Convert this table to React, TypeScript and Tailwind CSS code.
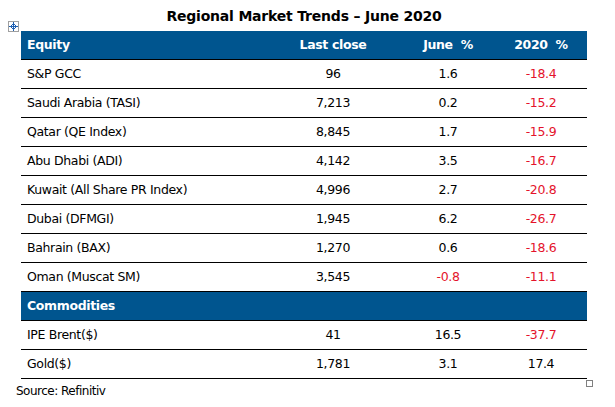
import React from "react";

type Row = { name: string; last: string; june: string; y: string };

const equity: Row[] = [
  { name: "S&P GCC", last: "96", june: "1.6", y: "-18.4" },
  { name: "Saudi Arabia (TASI)", last: "7,213", june: "0.2", y: "-15.2" },
  { name: "Qatar (QE Index)", last: "8,845", june: "1.7", y: "-15.9" },
  { name: "Abu Dhabi (ADI)", last: "4,142", june: "3.5", y: "-16.7" },
  { name: "Kuwait (All Share PR Index)", last: "4,996", june: "2.7", y: "-20.8" },
  { name: "Dubai (DFMGI)", last: "1,945", june: "6.2", y: "-26.7" },
  { name: "Bahrain (BAX)", last: "1,270", june: "0.6", y: "-18.6" },
  { name: "Oman (Muscat SM)", last: "3,545", june: "-0.8", y: "-11.1" },
];

const commodities: Row[] = [
  { name: "IPE Brent($)", last: "41", june: "16.5", y: "-37.7" },
  { name: "Gold($)", last: "1,781", june: "3.1", y: "17.4" },
];

function Val({ v }: { v: string }) {
  const neg = v.startsWith("-");
  return (
    <div className={neg ? "text-center text-[#e4132b]" : "text-center text-black"}>{v}</div>
  );
}

function DataRow({ r }: { r: Row }) {
  return (
    <div className="grid grid-cols-[244px_136px_94px_92px] h-[29px] items-center border-b border-black">
      <div className="pl-[6px]">{r.name}</div>
      <Val v={r.last} />
      <Val v={r.june} />
      <Val v={r.y} />
    </div>
  );
}

function MoveIcon() {
  return (
    <div className="absolute left-[8px] top-[21px] w-[11px] h-[11px] border border-[#a0a0a0] bg-white flex items-center justify-center">
      <svg width="9" height="9" viewBox="0 0 9 9">
        <g fill="#1f5fb0">
          <rect x="4" y="1" width="1" height="7" />
          <rect x="1" y="4" width="7" height="1" />
          <rect x="3" y="2" width="3" height="1" />
          <rect x="3" y="6" width="3" height="1" />
          <rect x="2" y="3" width="1" height="3" />
          <rect x="6" y="3" width="1" height="3" />
          <rect x="4" y="0" width="1" height="1" />
          <rect x="4" y="8" width="1" height="1" />
          <rect x="0" y="4" width="1" height="1" />
          <rect x="8" y="4" width="1" height="1" />
        </g>
      </svg>
    </div>
  );
}

export default function App() {
  return (
    <div className="relative w-[615px] h-[407px] bg-white text-black font-['DejaVu_Sans',Verdana,sans-serif] text-[12.5px] tracking-[-0.35px]">
      <MoveIcon />
      <div className="pl-[21px]">
        <div className="w-[566px]">
          <div className="h-[31px] flex items-end justify-center pb-[4px] font-bold text-[14px] tracking-[-0.2px]">
            Regional Market Trends – June 2020
          </div>
          <div className="grid grid-cols-[244px_136px_94px_92px] h-[29px] items-center bg-[#00558f] text-white font-bold border-b border-black">
            <div className="pl-[6px]">Equity</div>
            <div className="text-center">Last close</div>
            <div className="text-center">June&nbsp;&nbsp;%</div>
            <div className="text-center">2020&nbsp;&nbsp;%</div>
          </div>
          {equity.map((r) => (
            <DataRow key={r.name} r={r} />
          ))}
          <div className="h-[29px] flex items-center bg-[#00558f] text-white font-bold border-b border-black pl-[6px]">
            Commodities
          </div>
          {commodities.map((r) => (
            <DataRow key={r.name} r={r} />
          ))}
        </div>
      </div>
      <div className="pl-[16px] pt-[3px] text-[12px] tracking-[-0.5px]">Source: Refinitiv</div>
      <div className="absolute left-[586px] top-[380px] w-[7px] h-[7px] border border-[#808080] bg-white" />
    </div>
  );
}
